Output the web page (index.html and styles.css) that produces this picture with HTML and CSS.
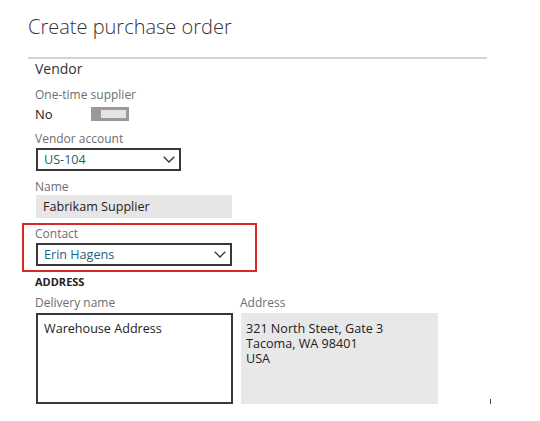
FILE: index.html
```html
<!DOCTYPE html>
<html>
<head>
<meta charset="utf-8">
<link rel="stylesheet" href="styles.css">
</head>
<body>
<div class="page">
  <h1 class="title">Create purchase order</h1>
  <div class="rule"></div>
  <div class="section">
    <div class="section-title">Vendor</div>
    <div class="label label-first">One-time supplier</div>
    <div class="toggle-row">
      <span class="toggle-value">No</span>
      <span class="toggle"><span class="toggle-thumb"></span><span class="toggle-track"></span></span>
    </div>
    <div class="label label-gap">Vendor account</div>
    <div class="select select-short">
      <span class="select-value">US-104</span>
      <svg class="chevron" width="12" height="7" viewBox="0 0 12 7"><path d="M0.7 0.7 L6 6 L11.3 0.7" fill="none" stroke="#333" stroke-width="1.3"/></svg>
    </div>
    <div class="label label-gap">Name</div>
    <div class="readonly">Fabrikam Supplier</div>
    <div class="highlight">
      <div class="label">Contact</div>
      <div class="select select-long">
        <span class="select-value">Erin Hagens</span>
        <svg class="chevron" width="12" height="7" viewBox="0 0 12 7"><path d="M0.7 0.7 L6 6 L11.3 0.7" fill="none" stroke="#333" stroke-width="1.3"/></svg>
      </div>
    </div>
    <div class="group-title">ADDRESS</div>
    <div class="address-row">
      <div class="address-col">
        <div class="label">Delivery name</div>
        <div class="textarea">Warehouse Address</div>
      </div>
      <div class="address-col">
        <div class="label">Address</div>
        <div class="address-box">321 North Steet, Gate 3<br>Tacoma, WA 98401<br>USA</div>
      </div>
      <div class="cursor"></div>
    </div>
  </div>
</div>
</body>
</html>
```

FILE: styles.css
```css
html, body {
  margin: 0;
  padding: 0;
  background: #ffffff;
}
body {
  font-family: "Open Sans", "Noto Sans", "Liberation Sans", sans-serif;
  color: #222;
}
.page {
  padding-left: 28px;
}
.title {
  margin: 0;
  padding-top: 13px;
  font-size: 20px;
  line-height: 28px;
  font-weight: 300;
  color: #333;
}
.rule {
  margin-top: 16px;
  width: 459px;
  height: 2px;
  background: #d3d3d3;
}
.section {
  padding-left: 8px;
}
.section-title {
  font-size: 14px;
  line-height: 20px;
  color: #333;
  margin-left: -1px;
}
.label {
  font-size: 12px;
  line-height: 16px;
  color: #6e6e6e;
  margin-left: -1px;
}
.label-first {
  margin-top: 8px;
}
.label-gap {
  margin-top: 8px;
}
.toggle-row {
  margin-top: 2px;
  height: 18px;
  display: flex;
  align-items: center;
}
.toggle-value {
  width: 56px;
  font-size: 13px;
  line-height: 18px;
  color: #222;
  margin-left: -1px;
}
.toggle {
  display: flex;
  width: 38px;
  height: 14px;
  box-sizing: border-box;
  border: 2px solid #999;
  background: #999;
}
.toggle-thumb {
  width: 8px;
  background: #999;
}
.toggle-track {
  flex: 1;
  margin: 1px 1px 1px 0;
  background: #e4e4e4;
}
.select {
  margin-top: 1px;
  height: 23px;
  box-sizing: border-box;
  border: 2px solid #383838;
  display: flex;
  align-items: center;
  justify-content: space-between;
  padding: 0 4px 0 6px;
}
.select-short {
  width: 145px;
}
.select-long {
  width: 196px;
}
.select-value {
  font-size: 12.6px;
  line-height: 19px;
  color: #1d5f7d;
}
.chevron {
  display: block;
}
.readonly {
  width: 196px;
  height: 23px;
  box-sizing: border-box;
  padding-left: 7px;
  background: #e6e6e6;
  font-size: 12.6px;
  line-height: 23px;
  color: #222;
}
.highlight {
  margin-top: 5px;
  margin-left: -14px;
  width: 235px;
  box-sizing: border-box;
  border: 2px solid #d42a2a;
  padding: 1px 0 4px 12px;
}
.group-title {
  margin-top: 3px;
  font-size: 11px;
  line-height: 14px;
  font-weight: 700;
  color: #222;
  margin-left: -1px;
}
.address-row {
  margin-top: 6px;
  display: flex;
  gap: 8px;
}
.address-col {
  display: flex;
  flex-direction: column;
}
.address-col .label {
  margin-bottom: 2px;
}
.textarea {
  width: 197px;
  height: 91px;
  box-sizing: border-box;
  border: 2px solid #383838;
  padding: 6px 6px;
  font-size: 12.6px;
  line-height: 15px;
  color: #222;
}
.address-box {
  width: 197px;
  height: 91px;
  box-sizing: border-box;
  background: #e8e8e8;
  padding: 8px 5px;
  font-size: 12.6px;
  line-height: 15px;
  color: #222;
}
.cursor {
  align-self: flex-end;
  margin-left: 44px;
  margin-bottom: -6px;
  width: 1px;
  height: 11px;
  background: #444;
}
```
